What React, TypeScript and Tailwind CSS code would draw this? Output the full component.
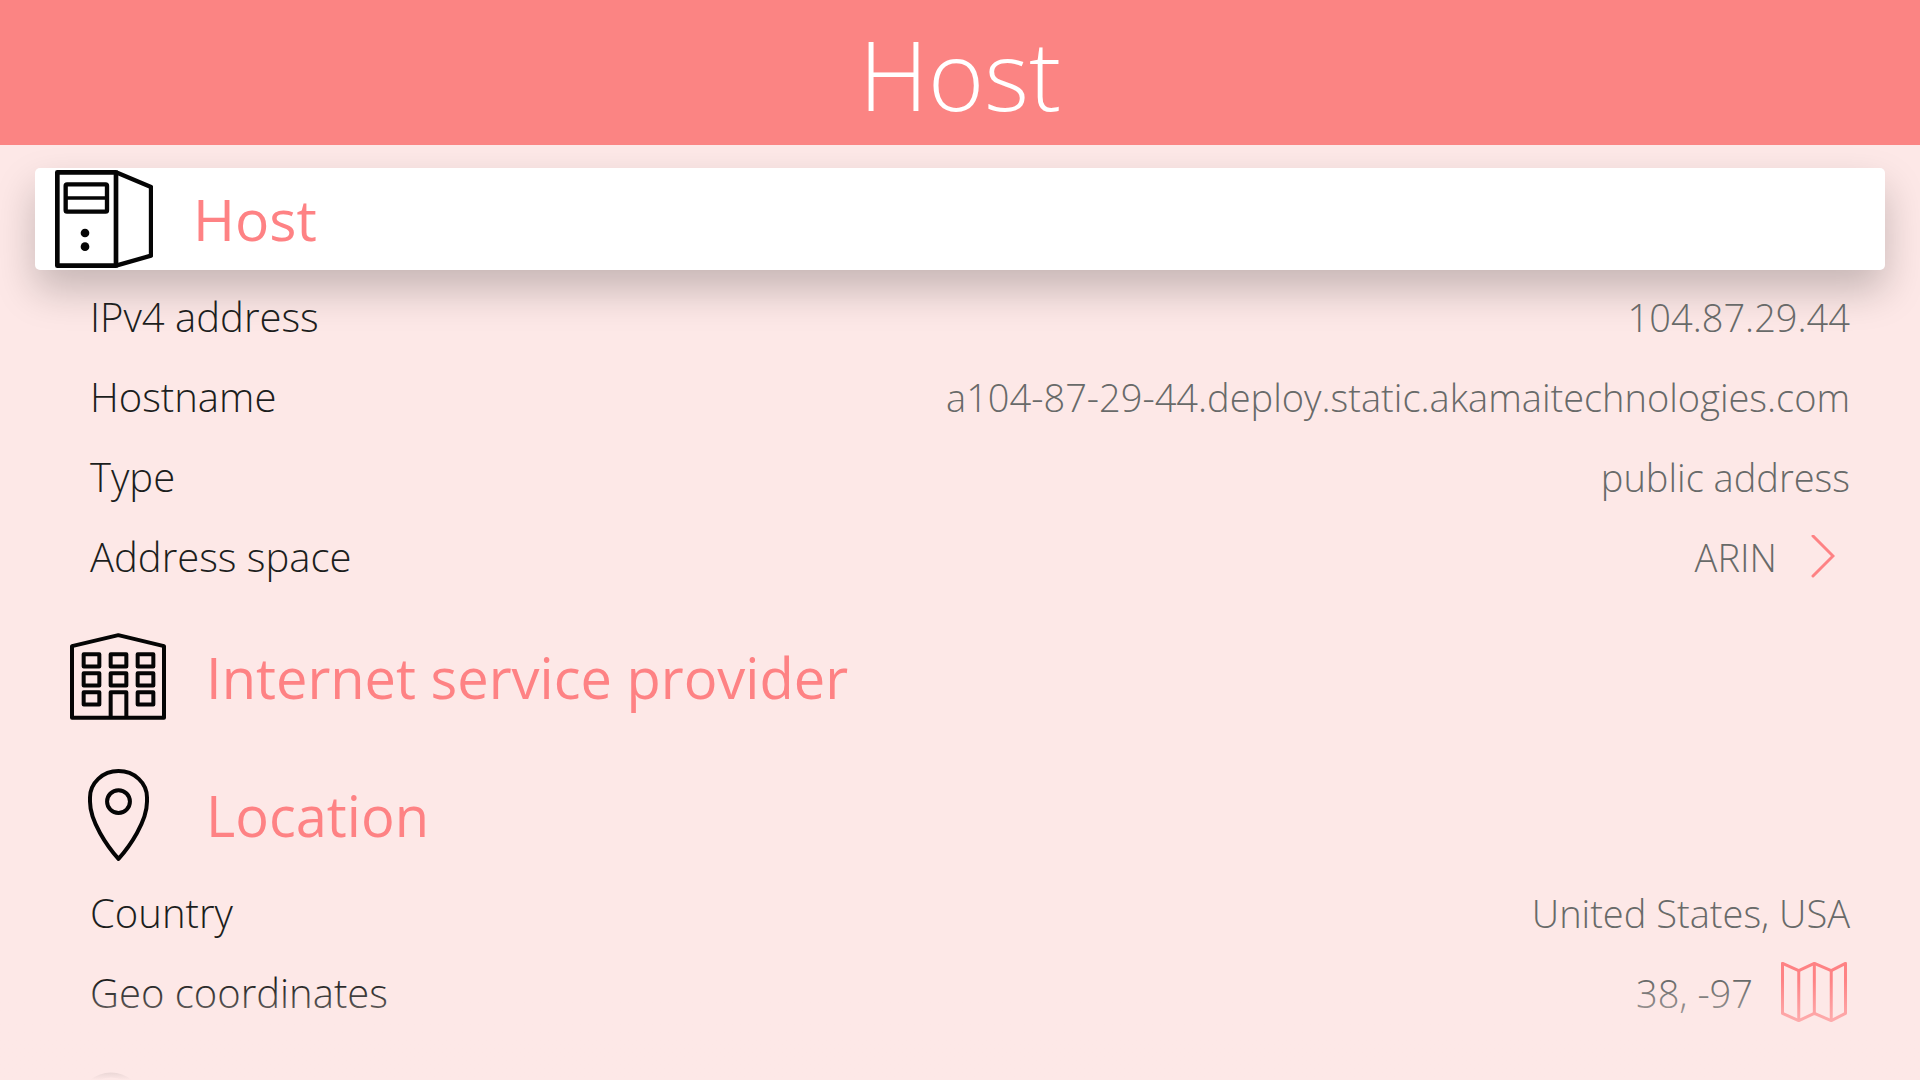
import type { ReactNode } from "react";

function ServerIcon() {
  return (
    <svg viewBox="0 0 294 294" className="h-[98px] w-[98px]" fill="none" stroke="#050505" strokeWidth="14" strokeLinejoin="round" aria-hidden="true">
      <path d="M7 7H183V287H7Z" />
      <path d="M183 7L288 51V257L183 287" strokeWidth="13" />
      <rect x="32" y="43" width="124" height="82" rx="4" strokeWidth="13" />
      <path d="M32 84H156" strokeWidth="11" />
      <circle cx="90" cy="189" r="13" fill="#050505" stroke="none" />
      <circle cx="90" cy="230" r="13" fill="#050505" stroke="none" />
    </svg>
  );
}

const windowCells = [
  [41, 63], [122, 63], [203, 63],
  [41, 120], [122, 120], [203, 120],
  [41, 177], [203, 177],
];

function BuildingIcon() {
  return (
    <svg viewBox="0 0 288 260" className="mb-0.5 h-[87px] w-24" fill="none" stroke="#050505" strokeWidth="12" strokeLinejoin="round" aria-hidden="true">
      <path d="M6 39L145 6L282 39V254H6Z" />
      {windowCells.map(([x, y]) => (
        <rect key={`${x}-${y}`} x={x} y={y} width="47" height="37" />
      ))}
      <path d="M122 254V177H169V254" />
    </svg>
  );
}

function PinIcon() {
  return (
    <svg viewBox="0 0 184 280" className="h-[93px] w-[61px]" fill="none" stroke="#050505" strokeWidth="12" strokeLinejoin="round" aria-hidden="true">
      <path d="M92 271C58 233 6 158 6 98V86C6 42 44 6 92 6S178 42 178 86V98C178 158 126 233 92 271Z" />
      <circle cx="92" cy="98" r="34.5" />
    </svg>
  );
}

function RingIcon() {
  return (
    <svg viewBox="0 0 84 84" className="h-[84px] w-[84px]" fill="none" stroke="#050505" strokeWidth="5" aria-hidden="true">
      <circle cx="35" cy="32" r="29" />
      <path d="M56 53L80 80" />
    </svg>
  );
}

function ChevronIcon() {
  return (
    <svg viewBox="0 0 24 44" className="h-11 w-6" fill="none" stroke="#fe8284" strokeWidth="3" strokeLinecap="round" aria-hidden="true">
      <path d="M2 1L22 21L2 41" />
    </svg>
  );
}

function MapIcon() {
  return (
    <svg viewBox="0 0 198 181" className="mb-0.5 h-[60px] w-[66px]" fill="none" stroke="#fe8284" strokeWidth="9" strokeLinejoin="round" aria-hidden="true">
      <path d="M4 4L53 26L100 4L151 26L194 4V155L151 177L100 155L53 177L4 155Z" />
      <path d="M53 26V177M100 4V155M151 26V177" />
    </svg>
  );
}

function SectionHeading({ icon, title }: { icon: ReactNode; title?: string }) {
  return (
    <h2 className="flex h-[115px] items-center gap-[39px] px-[69px] text-[56px] leading-none text-[#fe8284]">
      <span className="flex w-[98px] shrink-0 justify-center">{icon}</span>
      {title && <span className="pb-0.5">{title}</span>}
    </h2>
  );
}

function Row({ label, value, action }: { label: string; value: string; action?: ReactNode }) {
  return (
    <div className="flex h-20 items-center justify-between pr-[70px] pl-[90px] font-light">
      <dt className="text-[40px] leading-none text-[#1c1e1d]">{label}</dt>
      <dd className="flex items-center text-[38px] leading-none text-[#686a69]">
        {value}
        {action}
      </dd>
    </div>
  );
}

export default function App() {
  return (
    <div className="relative flex h-screen flex-col overflow-hidden bg-[#fde8e7] font-['Open_Sans',sans-serif]">
      <header className="flex h-[145px] shrink-0 items-center justify-center bg-[#fb8483]">
        <h1 className="pt-0.5 text-[96px] leading-none font-light text-white">Host</h1>
      </header>

      <main className="flex flex-col gap-[23px] overflow-hidden pt-[23px]">
        <section>
          <h2 className="mx-[35px] mb-[7px]">
            <button
              type="button"
              className="flex h-[102px] w-full items-center gap-10 rounded-[5px] bg-white px-5 text-left text-[57px] leading-none text-[#fe8284] shadow-[0_20px_40px_rgba(0,0,0,0.22)]"
            >
              <ServerIcon />
              Host
            </button>
          </h2>
          <dl>
            <Row label="IPv4 address" value="104.87.29.44" />
            <Row label="Hostname" value="a104-87-29-44.deploy.static.akamaitechnologies.com" />
            <Row label="Type" value="public address" />
            <Row
              label="Address space"
              value="ARIN"
              action={
                <button type="button" aria-label="Open address space" className="mr-[15px] ml-[34px]">
                  <ChevronIcon />
                </button>
              }
            />
          </dl>
        </section>

        <section>
          <SectionHeading icon={<BuildingIcon />} title="Internet service provider" />
        </section>

        <section>
          <SectionHeading icon={<PinIcon />} title="Location" />
          <dl>
            <Row label="Country" value="United States, USA" />
            <Row
              label="Geo coordinates"
              value="38, -97"
              action={
                <button type="button" aria-label="Show on map" className="mr-[3px] ml-7">
                  <MapIcon />
                </button>
              }
            />
          </dl>
        </section>

        <section>
          <SectionHeading icon={<RingIcon />} />
        </section>
      </main>

      <div className="pointer-events-none absolute inset-x-0 bottom-0 h-[100px] bg-linear-to-t from-[#fde8e7] to-[#fde8e7]/0" />
    </div>
  );
}
